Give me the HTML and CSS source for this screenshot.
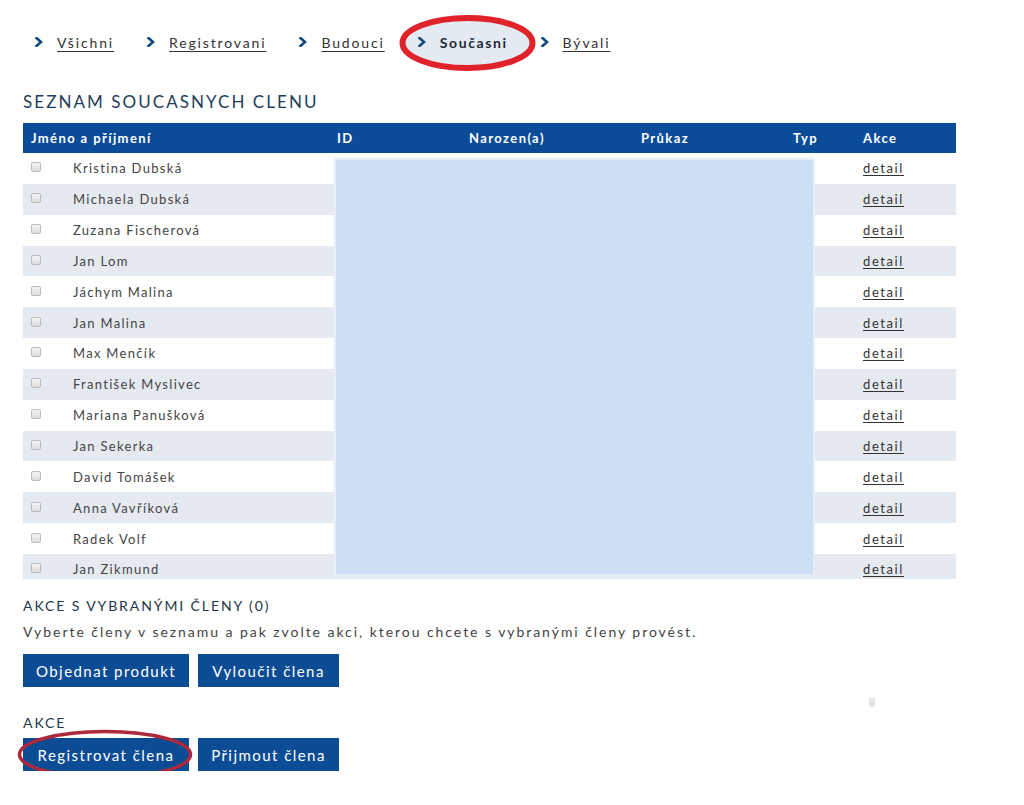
FILE: index.html
```html
<!DOCTYPE html>
<html lang="cs">
<head>
<meta charset="utf-8">
<title>Seznam současných členů</title>
<link rel="stylesheet" href="styles.css">
</head>
<body>
<div class="page">
  <nav class="tabs">
    <a class="tab" href="#"><svg class="chev" viewBox="0 0 8 10"><polyline points="1.5,1 6,5 1.5,9"/></svg><span class="tab-label">Všichni</span></a>
    <a class="tab" href="#"><svg class="chev" viewBox="0 0 8 10"><polyline points="1.5,1 6,5 1.5,9"/></svg><span class="tab-label">Registrovani</span></a>
    <a class="tab" href="#"><svg class="chev" viewBox="0 0 8 10"><polyline points="1.5,1 6,5 1.5,9"/></svg><span class="tab-label">Budouci</span></a>
    <a class="tab active" href="#">
      <svg class="mark-oval" viewBox="0 0 140 58"><ellipse cx="70" cy="29" rx="65" ry="25"/></svg>
      <svg class="chev" viewBox="0 0 8 10"><polyline points="1.5,1 6,5 1.5,9"/></svg><span class="tab-label">Současni</span></a>
    <a class="tab" href="#"><svg class="chev" viewBox="0 0 8 10"><polyline points="1.5,1 6,5 1.5,9"/></svg><span class="tab-label">Bývali</span></a>
  </nav>

  <h1 class="title">SEZNAM SOUCASNYCH CLENU</h1>

  <div class="table">
    <div class="thead">
      <div class="th th-name">Jméno a příjmení</div>
      <div class="th">ID</div>
      <div class="th">Narozen(a)</div>
      <div class="th">Průkaz</div>
      <div class="th">Typ</div>
      <div class="th">Akce</div>
    </div>
    <div class="tbody">
      <div class="row"><span class="cb"></span><span class="name">Kristina Dubská</span><span></span><span></span><span></span><span></span><a class="detail" href="#">detail</a></div>
      <div class="row"><span class="cb"></span><span class="name">Michaela Dubská</span><span></span><span></span><span></span><span></span><a class="detail" href="#">detail</a></div>
      <div class="row"><span class="cb"></span><span class="name">Zuzana Fischerová</span><span></span><span></span><span></span><span></span><a class="detail" href="#">detail</a></div>
      <div class="row"><span class="cb"></span><span class="name">Jan Lom</span><span></span><span></span><span></span><span></span><a class="detail" href="#">detail</a></div>
      <div class="row"><span class="cb"></span><span class="name">Jáchym Malina</span><span></span><span></span><span></span><span></span><a class="detail" href="#">detail</a></div>
      <div class="row"><span class="cb"></span><span class="name">Jan Malina</span><span></span><span></span><span></span><span></span><a class="detail" href="#">detail</a></div>
      <div class="row"><span class="cb"></span><span class="name">Max Menčík</span><span></span><span></span><span></span><span></span><a class="detail" href="#">detail</a></div>
      <div class="row"><span class="cb"></span><span class="name">František Myslivec</span><span></span><span></span><span></span><span></span><a class="detail" href="#">detail</a></div>
      <div class="row"><span class="cb"></span><span class="name">Mariana Panušková</span><span></span><span></span><span></span><span></span><a class="detail" href="#">detail</a></div>
      <div class="row"><span class="cb"></span><span class="name">Jan Sekerka</span><span></span><span></span><span></span><span></span><a class="detail" href="#">detail</a></div>
      <div class="row"><span class="cb"></span><span class="name">David Tomášek</span><span></span><span></span><span></span><span></span><a class="detail" href="#">detail</a></div>
      <div class="row"><span class="cb"></span><span class="name">Anna Vavříková</span><span></span><span></span><span></span><span></span><a class="detail" href="#">detail</a></div>
      <div class="row"><span class="cb"></span><span class="name">Radek Volf</span><span></span><span></span><span></span><span></span><a class="detail" href="#">detail</a></div>
      <div class="row"><span class="cb"></span><span class="name">Jan Zikmund</span><span></span><span></span><span></span><span></span><a class="detail" href="#">detail</a></div>
    </div>
    <div class="redact"></div>
  </div>

  <h2 class="subtitle">AKCE S VYBRANÝMI ČLENY (0)</h2>
  <p class="hint">Vyberte členy v seznamu a pak zvolte akci, kterou chcete s vybranými členy provést.</p>
  <div class="btns btns-first">
    <button class="btn btn-a">Objednat produkt</button>
    <button class="btn btn-b">Vyloučit člena</button>
    <span class="stray"></span>
  </div>

  <h2 class="subtitle subtitle-akce">AKCE</h2>
  <div class="btns btns-second">
    <button class="btn btn-a btn-marked">Registrovat člena
      <svg class="mark-oval2" viewBox="0 0 176 51"><ellipse cx="88" cy="25.5" rx="85.5" ry="23"/></svg>
    </button>
    <button class="btn btn-b">Přijmout člena</button>
  </div>
</div>
</body>
</html>
```

FILE: styles.css
```css
* { box-sizing: border-box; }

body {
  margin: 0;
  background: #fff;
  font-family: "Lato", "Noto Sans", sans-serif;
  color: #3a3a3a;
}

.page {
  padding: 32px 0 0 23px;
  width: 1024px;
}

/* ---------- tabs ---------- */
.tabs {
  display: flex;
  align-items: center;
  height: 20px;
  padding-left: 12px;
}

.tab {
  position: relative;
  display: flex;
  align-items: center;
  color: #333;
  font-size: 14px;
  letter-spacing: 1.85px;
  text-decoration: none;
  margin-right: 33px;
}

.tab-label {
  text-decoration: underline;
  text-underline-offset: 3px;
  position: relative;
}

.tab.active .tab-label {
  text-decoration: none;
  color: #1e2a38;
  font-weight: 700;
  letter-spacing: 1.6px;
}

.chev {
  width: 8px;
  height: 10px;
  margin-right: 14px;
  position: relative;
  fill: none;
  stroke: #174a7c;
  stroke-width: 2.6;
  stroke-linecap: square;
}

.mark-oval {
  position: absolute;
  left: -21px;
  top: calc(50% - 28px);
  width: 141px;
  height: 58px;
  fill: #e4eaf1;
  stroke: #e0222b;
  stroke-width: 6;
}

/* ---------- title ---------- */
.title {
  margin: 40px 0 0 0;
  font-size: 17px;
  font-weight: 400;
  letter-spacing: 2.05px;
  color: #1f3d5a;
  height: 20px;
  line-height: 20px;
}

/* ---------- table ---------- */
.table {
  position: relative;
  margin-top: 11px;
  width: 933px;
  height: 456px;
  overflow: hidden;
}

.thead, .row {
  display: grid;
  grid-template-columns: 50px 264px 132px 172px 152px 70px 93px;
  align-items: center;
}

.thead {
  height: 30px;
  background: #0a4c98;
  color: #fff;
  font-weight: 700;
  font-size: 13px;
  letter-spacing: 1.4px;
}

.th-name {
  grid-column: span 2;
  padding-left: 8px;
}

.row {
  height: 30.85px;
  font-size: 13px;
  letter-spacing: 1.3px;
  color: #444;
  background: #fff;
}

.row:nth-child(even) { background: #e5eaf1; }

.cb {
  justify-self: start;
  margin-left: 8px;
  width: 10px;
  height: 10px;
  border: 1px solid #b9bcc1;
  border-radius: 2px;
  background: linear-gradient(#f4f4f4, #dcdcdc);
  margin-top: -2px;
}

.detail {
  color: #333;
  text-decoration: underline;
  text-underline-offset: 2px;
  letter-spacing: 1.6px;
}

.redact {
  position: absolute;
  left: 313px;
  top: 37px;
  width: 477px;
  height: 414px;
  background: #cddff2;
  box-shadow: 0 0 0 2px #e6eef7;
}

/* ---------- actions ---------- */
.subtitle {
  margin: 19px 0 0 0;
  font-size: 14px;
  font-weight: 400;
  letter-spacing: 1.9px;
  color: #23364a;
  height: 16px;
  line-height: 16px;
}

.hint {
  margin: 9px 0 0 0;
  font-size: 14px;
  letter-spacing: 1.95px;
  color: #444;
  height: 18px;
  line-height: 18px;
}

.btns {
  position: relative;
  display: flex;
  gap: 9px;
}

.btns-first { margin-top: 13px; }
.btns-second { margin-top: 7px; }

.btn {
  position: relative;
  height: 33px;
  border: 0;
  border-radius: 0;
  background: #0b4c94;
  color: #fff;
  font-family: "Lato", "Noto Sans", sans-serif;
  font-size: 15px;
  letter-spacing: 1.45px;
  padding: 0;
  text-align: center;
}

.btn-a { width: 166px; }
.btn-b { width: 141px; }

.stray {
  position: absolute;
  left: 846px;
  top: 44px;
  width: 6px;
  height: 9px;
  background: #e6e6e6;
}

.subtitle-akce {
  margin-top: 28px;
}

.mark-oval2 {
  position: absolute;
  left: -6px;
  top: -9px;
  width: 176px;
  height: 51px;
  fill: none;
  stroke: #ad2a3d;
  stroke-width: 3.5;
  pointer-events: none;
}
```
